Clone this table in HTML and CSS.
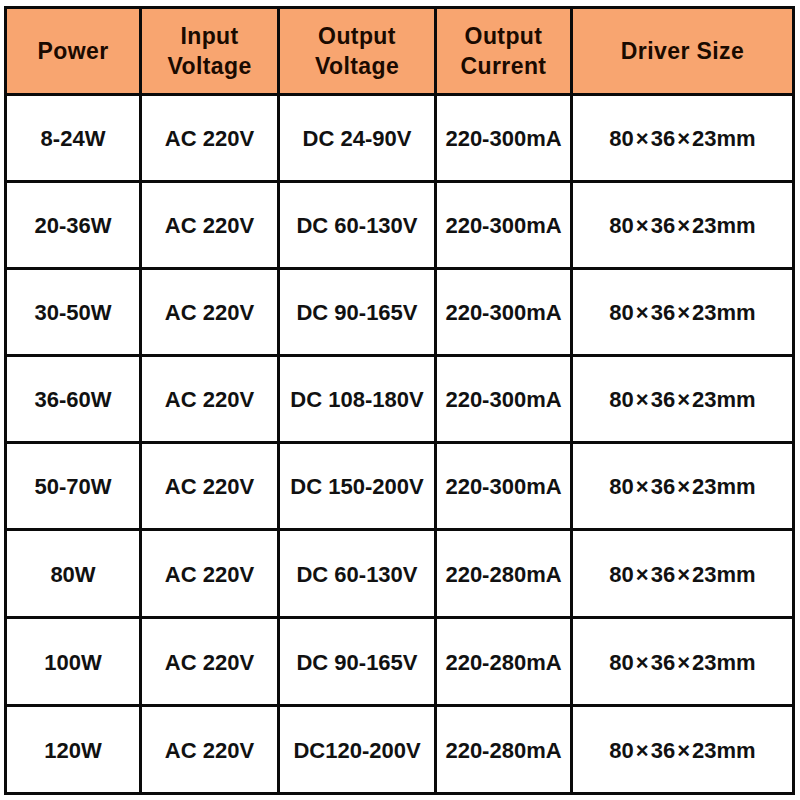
FILE: index.html
```html
<!DOCTYPE html>
<html>
<head>
<meta charset="utf-8">
<link rel="stylesheet" href="styles.css">
</head>
<body>
<div class="table">
  <div class="cell head">Power</div>
  <div class="cell head">Input<br>Voltage</div>
  <div class="cell head">Output<br>Voltage</div>
  <div class="cell head">Output<br>Current</div>
  <div class="cell head">Driver Size</div>

  <div class="cell">8-24W</div><div class="cell">AC 220V</div><div class="cell">DC 24-90V</div><div class="cell">220-300mA</div><div class="cell">80<span class="x">×</span>36<span class="x">×</span>23mm</div>
  <div class="cell">20-36W</div><div class="cell">AC 220V</div><div class="cell">DC 60-130V</div><div class="cell">220-300mA</div><div class="cell">80<span class="x">×</span>36<span class="x">×</span>23mm</div>
  <div class="cell">30-50W</div><div class="cell">AC 220V</div><div class="cell">DC 90-165V</div><div class="cell">220-300mA</div><div class="cell">80<span class="x">×</span>36<span class="x">×</span>23mm</div>
  <div class="cell">36-60W</div><div class="cell">AC 220V</div><div class="cell">DC 108-180V</div><div class="cell">220-300mA</div><div class="cell">80<span class="x">×</span>36<span class="x">×</span>23mm</div>
  <div class="cell">50-70W</div><div class="cell">AC 220V</div><div class="cell">DC 150-200V</div><div class="cell">220-300mA</div><div class="cell">80<span class="x">×</span>36<span class="x">×</span>23mm</div>
  <div class="cell">80W</div><div class="cell">AC 220V</div><div class="cell">DC 60-130V</div><div class="cell">220-280mA</div><div class="cell">80<span class="x">×</span>36<span class="x">×</span>23mm</div>
  <div class="cell">100W</div><div class="cell">AC 220V</div><div class="cell">DC 90-165V</div><div class="cell">220-280mA</div><div class="cell">80<span class="x">×</span>36<span class="x">×</span>23mm</div>
  <div class="cell">120W</div><div class="cell">AC 220V</div><div class="cell">DC120-200V</div><div class="cell">220-280mA</div><div class="cell">80<span class="x">×</span>36<span class="x">×</span>23mm</div>
</div>
</body>
</html>
```

FILE: styles.css
```css
html, body {
  margin: 0;
  padding: 0;
  background: #ffffff;
}

body {
  padding: 6px 0 0 4px;
  font-family: "Liberation Sans", Arial, sans-serif;
  font-weight: bold;
  color: #111111;
}

.table {
  display: grid;
  width: max-content;
  grid-template-columns: 135px 138px 157px 136px 222px;
  grid-template-rows: 87px repeat(5, 87px) repeat(3, 88px);
  border-left: 3px solid #0a0a0a;
  border-top: 3px solid #0a0a0a;
}

.cell {
  box-sizing: border-box;
  border-right: 3px solid #0a0a0a;
  border-bottom: 3px solid #0a0a0a;
  display: flex;
  align-items: center;
  justify-content: center;
  text-align: center;
  font-size: 22px;
  line-height: 30px;
  padding-top: 2px;
}

.x {
  margin: 0 2px;
}

.head {
  background: #f8a570;
  color: #1a0a00;
  padding-top: 0;
  font-size: 23px;
  letter-spacing: 0.4px;
}
```
